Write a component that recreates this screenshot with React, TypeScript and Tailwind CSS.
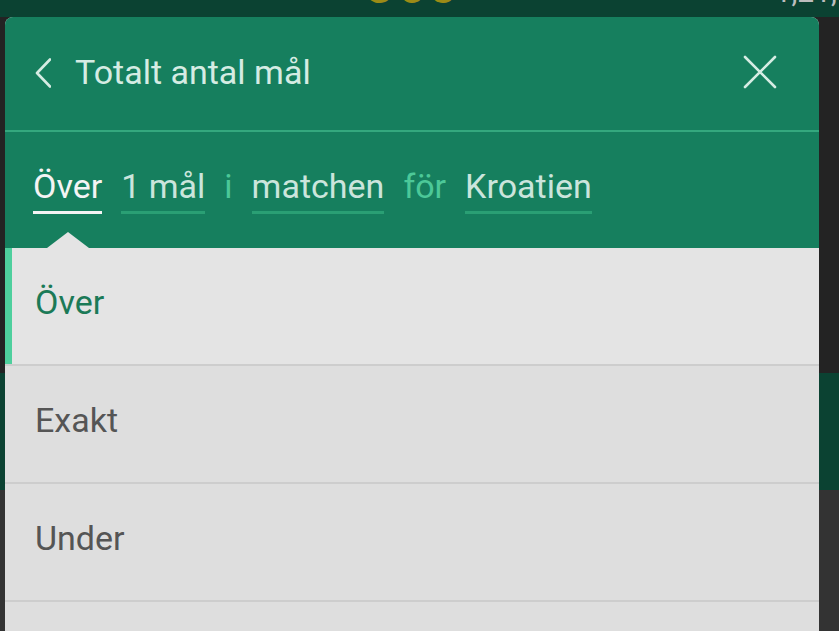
import React from 'react';

const font = { fontFamily: 'Roboto, "Noto Sans", sans-serif' };

function SideStrip({ width }: { width: string }) {
  return (
    <div className={`flex flex-col ${width} shrink-0`}>
      <div className="h-[356px] bg-[#232323]" />
      <div className="h-[117px] bg-[#0b4232]" />
      <div className="flex-1 bg-[#333333]" />
    </div>
  );
}

function Word({ text, active }: { text: string; active?: boolean }) {
  return (
    <span
      className={`block leading-[40px] pb-[5px] border-b-[3px] ${
        active ? 'text-[#f4f4f4] border-[#f4f4f4]' : 'text-[#cbe5dc] border-[#2a9f74]'
      }`}
    >
      {text}
    </span>
  );
}

function Joiner({ text }: { text: string }) {
  return <span className="block leading-[40px] pb-[8px] text-[#4cc898]">{text}</span>;
}

const options = ['Över', 'Exakt', 'Under', ''];

export default function App() {
  return (
    <div className="w-[839px] h-[631px] overflow-hidden flex flex-col bg-[#232323]" style={font}>
      <div className="h-[17px] shrink-0 bg-[#0b4232] flex overflow-hidden">
        <span className="ml-[366px] mt-[-37px] text-[48px] leading-none font-bold text-[#9c8b16] tracking-[4px]">
          365
        </span>
        <span className="ml-auto mr-[2px] mt-[-23px] text-[30px] leading-none text-[#bdbdbd]">1,21,</span>
      </div>

      <div className="flex flex-1">
        <SideStrip width="w-[5px]" />

        <div className="w-[814px] shrink-0 flex flex-col rounded-t-[8px] overflow-hidden bg-[#dedede]">
          <div className="h-[113px] shrink-0 bg-[#167f5e] flex items-start pt-[35px] pl-[30px] pr-[42px]">
            <svg width="16" height="30" viewBox="0 0 16 30" className="mt-[6px]">
              <polyline
                points="15,1.5 2,15 15,28.5"
                fill="none"
                stroke="#d5ece3"
                strokeWidth="2.6"
                strokeLinecap="round"
                strokeLinejoin="round"
              />
            </svg>
            <span className="ml-[24px] text-[34px] leading-[40px] text-[#d5ece3]">Totalt antal mål</span>
            <svg width="34" height="34" viewBox="0 0 34 34" className="ml-auto mt-[3px]">
              <path
                d="M2 2 L32 32 M32 2 L2 32"
                fill="none"
                stroke="#d5ece3"
                strokeWidth="2.6"
                strokeLinecap="round"
              />
            </svg>
          </div>

          <div className="h-[2px] shrink-0 bg-[#34a87e]" />

          <div className="h-[116px] shrink-0 bg-[#167f5e] relative pt-[34px] pl-[28px]">
            <div className="flex items-start gap-[19px] text-[34px]">
              <Word text="Över" active />
              <Word text="1 mål" />
              <Joiner text="i" />
              <Word text="matchen" />
              <Joiner text="för" />
              <Word text="Kroatien" />
            </div>
            <div className="absolute left-[42px] bottom-0 w-0 h-0 border-l-[21px] border-r-[21px] border-b-[16px] border-l-transparent border-r-transparent border-b-[#e4e4e4]" />
          </div>

          {options.map((opt, i) => (
            <div
              key={i}
              className={`h-[118px] shrink-0 border-b-2 border-[#cdcdcd] ${
                i === 0 ? 'bg-[#e4e4e4]' : 'bg-[#dedede]'
              }`}
            >
              <div
                className={`h-full pt-[34px] ${
                  i === 0 ? 'border-l-[7px] border-[#4ecf9d] pl-[23px] text-[#1b7a57]' : 'pl-[30px] text-[#555555]'
                } text-[34px] leading-[40px]`}
              >
                {opt}
              </div>
            </div>
          ))}
        </div>

        <SideStrip width="flex-1" />
      </div>
    </div>
  );
}
